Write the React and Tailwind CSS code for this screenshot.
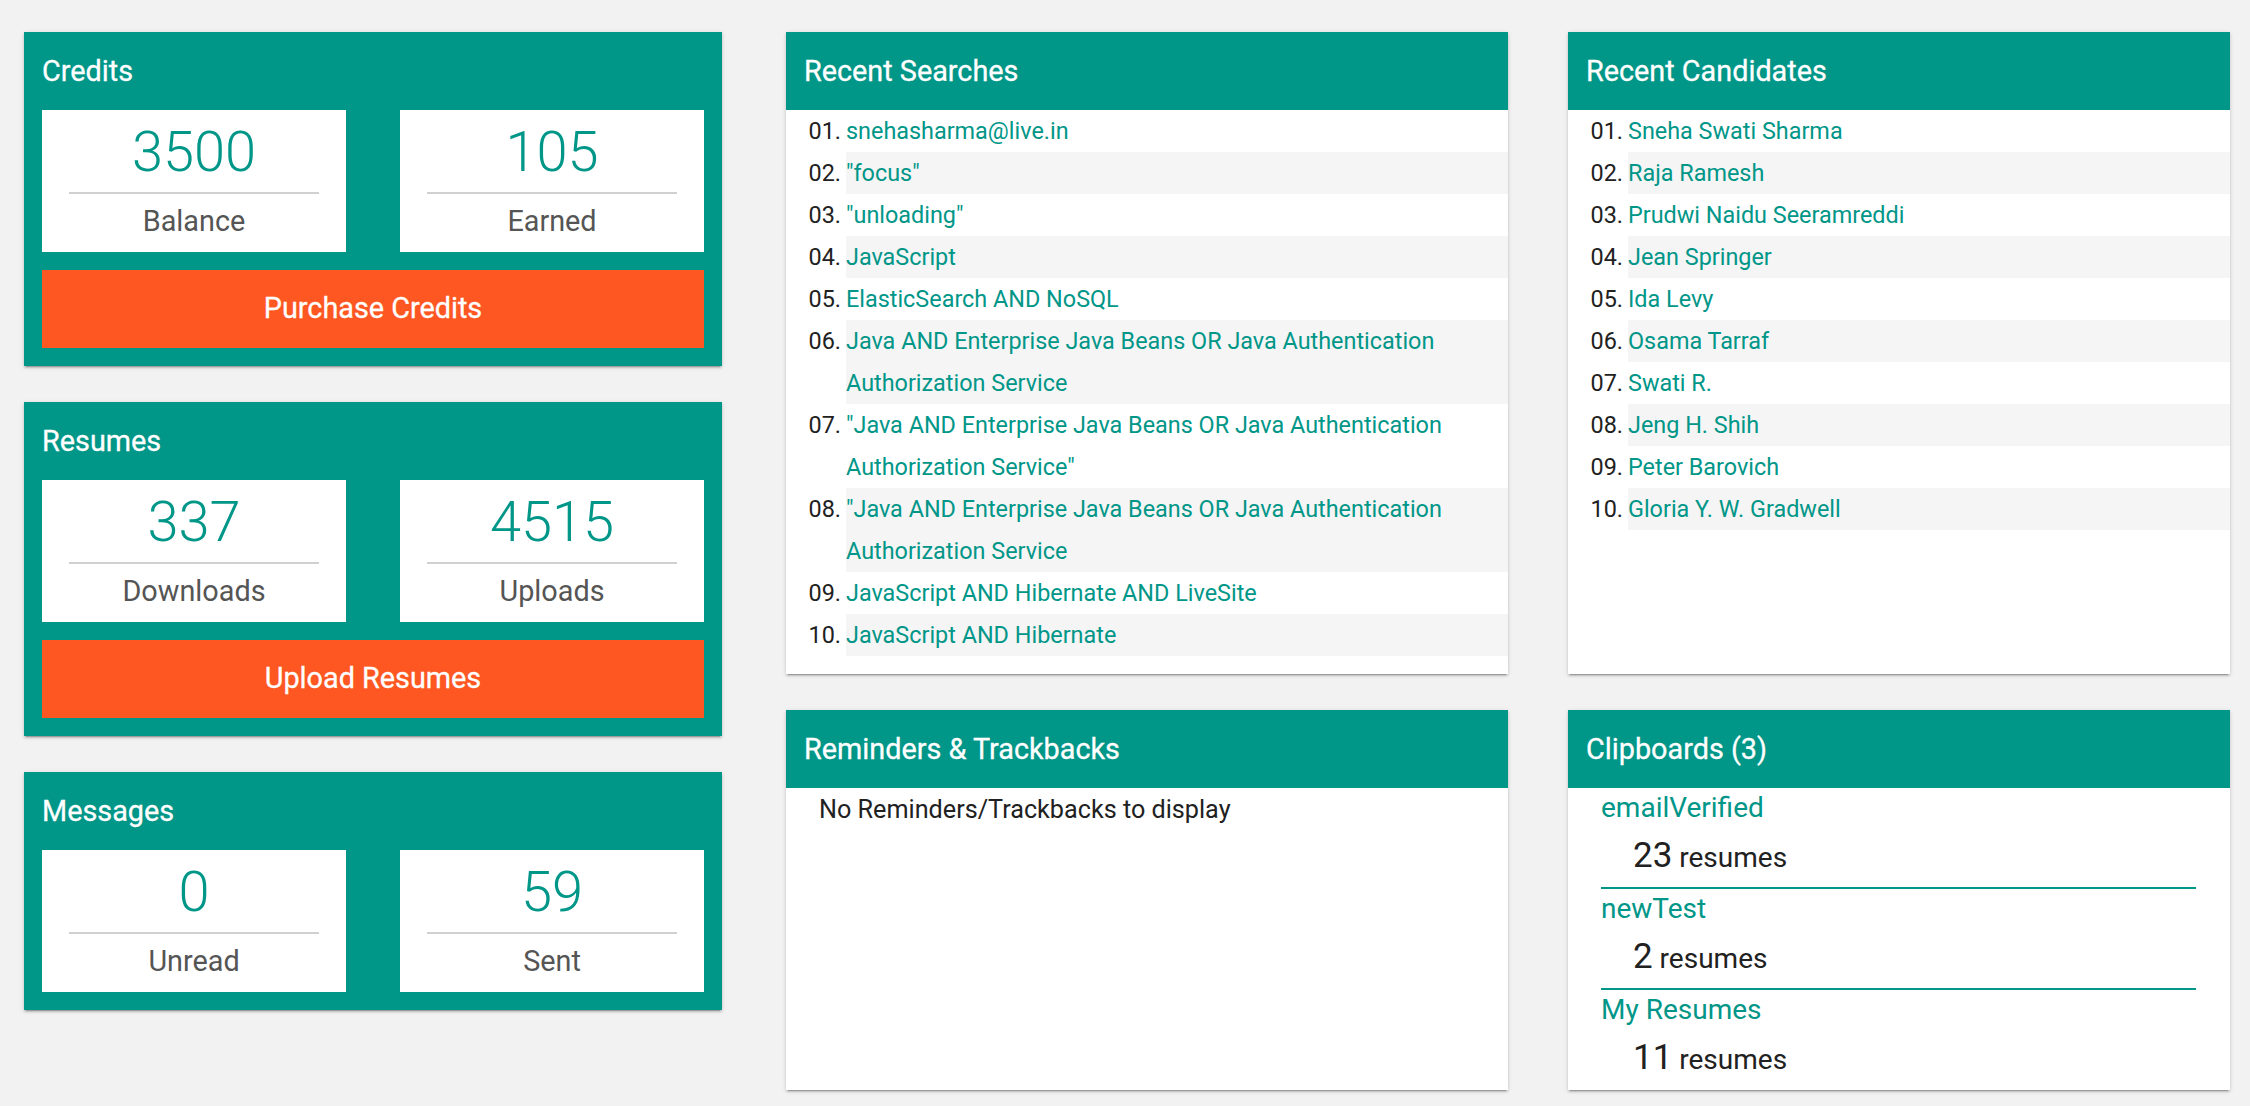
import React from "react";

const searches = [
  "snehasharma@live.in",
  "\"focus\"",
  "\"unloading\"",
  "JavaScript",
  "ElasticSearch AND NoSQL",
  "Java AND Enterprise Java Beans OR Java Authentication Authorization Service",
  "\"Java AND Enterprise Java Beans OR Java Authentication Authorization Service\"",
  "\"Java AND Enterprise Java Beans OR Java Authentication Authorization Service",
  "JavaScript AND Hibernate AND LiveSite",
  "JavaScript AND Hibernate",
];

const candidates = [
  "Sneha Swati Sharma",
  "Raja Ramesh",
  "Prudwi Naidu Seeramreddi",
  "Jean Springer",
  "Ida Levy",
  "Osama Tarraf",
  "Swati R.",
  "Jeng H. Shih",
  "Peter Barovich",
  "Gloria Y. W. Gradwell",
];

const clipboards = [
  { name: "emailVerified", count: 23 },
  { name: "newTest", count: 2 },
  { name: "My Resumes", count: 11 },
];

const shadow =
  "shadow-[0_2px_2px_0_rgba(0,0,0,0.14),0_3px_1px_-2px_rgba(0,0,0,0.2),0_1px_5px_0_rgba(0,0,0,0.12)]";

function CardHeader({ title }) {
  return (
    <div className="h-[78px] bg-[#009688] px-[18px] text-[28.8px] leading-[78px] text-white [-webkit-text-stroke:0.3px_white]">
      {title}
    </div>
  );
}

function StatBox({ value, label }) {
  return (
    <div className="flex h-[142px] w-[304px] flex-col items-center bg-white pt-[10px]">
      <div className="h-[64px] text-[56px] font-light leading-[64px] text-[#009688]">{value}</div>
      <div className="mt-[8px] h-[2px] w-[250px] bg-[#d0d0d0]" />
      <div className="mt-[7px] text-[28.8px] leading-[40px] text-[#555]">{label}</div>
    </div>
  );
}

function StatCard({ title, stats, action }) {
  return (
    <div className={`w-[698px] bg-[#009688] ${shadow}`}>
      <CardHeader title={title} />
      <div className="flex justify-between px-[18px] pb-[18px]">
        {stats.map((s) => (
          <StatBox key={s.label} value={s.value} label={s.label} />
        ))}
      </div>
      {action && (
        <div className="px-[18px] pb-[18px]">
          <button className="h-[78px] w-full bg-[#ff5722] text-[28.8px] text-white [-webkit-text-stroke:0.3px_white]">
            {action}
          </button>
        </div>
      )}
    </div>
  );
}

function NumberedList({ title, rows, width }) {
  return (
    <div className={`h-[642px] bg-white ${shadow} ${width}`}>
      <CardHeader title={title} />
      <ol>
        {rows.map((row, i) => (
          <li key={i} className="flex text-[23.4px] leading-[42px]">
            <span className="w-[60px] shrink-0 pr-[5px] text-right text-[#212121]">
              {String(i + 1).padStart(2, "0")}.
            </span>
            <span className={`flex-1 pr-[16px] text-[#009688] ${i % 2 === 1 ? "bg-[#f5f5f5]" : ""}`}>
              {row}
            </span>
          </li>
        ))}
      </ol>
    </div>
  );
}

export default function App() {
  return (
    <div className="min-h-[1106px] w-[2250px] bg-[#f2f2f2] font-['Roboto',sans-serif]">
      <div className="flex items-start pl-[24px] pt-[32px]">
        {/* Left column */}
        <div className="flex w-[698px] flex-col gap-[36px]">
          <StatCard
            title="Credits"
            stats={[
              { value: "3500", label: "Balance" },
              { value: "105", label: "Earned" },
            ]}
            action="Purchase Credits"
          />
          <StatCard
            title="Resumes"
            stats={[
              { value: "337", label: "Downloads" },
              { value: "4515", label: "Uploads" },
            ]}
            action="Upload Resumes"
          />
          <StatCard
            title="Messages"
            stats={[
              { value: "0", label: "Unread" },
              { value: "59", label: "Sent" },
            ]}
          />
        </div>

        {/* Middle column */}
        <div className="ml-[64px] flex w-[722px] flex-col gap-[36px]">
          <NumberedList width="w-[722px]" title="Recent Searches" rows={searches} />
          <div className={`h-[380px] bg-white ${shadow}`}>
            <CardHeader title="Reminders & Trackbacks" />
            <div className="pl-[33px] text-[25.2px] leading-[44px] text-[#212121]">
              No Reminders/Trackbacks to display
            </div>
          </div>
        </div>

        {/* Right column */}
        <div className="ml-[60px] flex w-[662px] flex-col gap-[36px]">
          <NumberedList width="w-[662px]" title="Recent Candidates" rows={candidates} />
          <div className={`h-[380px] bg-white ${shadow}`}>
            <CardHeader title={`Clipboards (${clipboards.length})`} />
            <div className="pl-[33px] pr-[34px]">
              {clipboards.map((c, i) => (
                <div key={c.name}>
                  <div className="text-[28px] leading-[40px] text-[#009688]">{c.name}</div>
                  <div className="h-[50px] pl-[32px] text-[28px] leading-[56px] text-[#212121]">
                    <span className="text-[35px]">{c.count}</span> resumes
                  </div>
                  {i < clipboards.length - 1 && <div className="mt-[9px] h-[2px] bg-[#009688]" />}
                </div>
              ))}
            </div>
          </div>
        </div>
      </div>
    </div>
  );
}
